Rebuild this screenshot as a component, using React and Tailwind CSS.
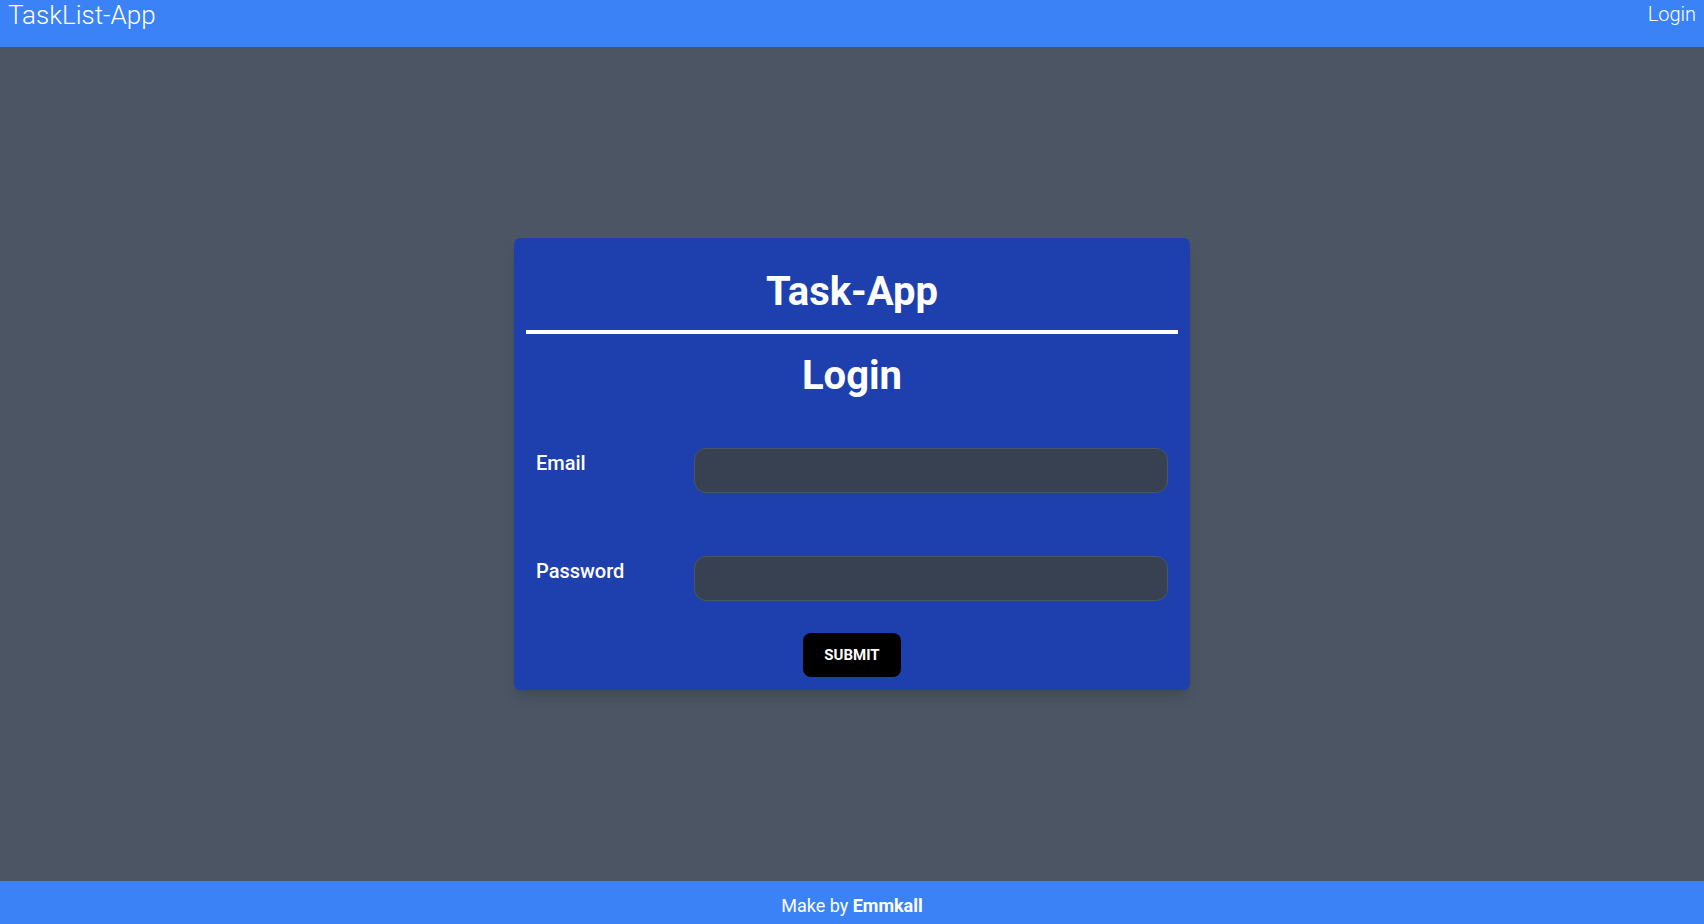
export default function App() {
  return (
    <div className="flex h-screen flex-col bg-[#4b5563] font-['Roboto',sans-serif] text-white">
      <header className="flex h-[47px] shrink-0 items-start justify-between bg-[#3b82f6] px-2">
        <span className="mt-[2px] text-[26px] leading-none font-light">TaskList-App</span>
        <a href="#" className="mt-[4px] text-xl leading-none font-light">
          Login
        </a>
      </header>

      <main className="flex flex-1 items-center justify-center">
        <div className="w-[676px] rounded-md bg-[#1e40af] p-3 pb-[13px] shadow-lg">
          <h1 className="mt-[18px] mb-[14px] text-center text-[40px] leading-[48px] font-bold">Task-App</h1>
          <hr className="border-t-4 border-white" />
          <h2 className="mt-[18px] text-center text-[40px] leading-[48px] font-bold">Login</h2>

          <form className="mt-12 px-[10px]" onSubmit={(e) => e.preventDefault()}>
            <div className="grid grid-cols-4 items-start">
              <label htmlFor="email" className="pt-[1px] text-xl font-medium">
                Email
              </label>
              <input
                id="email"
                type="email"
                className="col-span-3 h-[45px] rounded-xl border border-[#4b5563] bg-[#374151] px-3 outline-none"
              />
            </div>
            <div className="mt-[63px] grid grid-cols-4 items-start">
              <label htmlFor="password" className="pt-[1px] text-xl font-medium">
                Password
              </label>
              <input
                id="password"
                type="password"
                className="col-span-3 h-[45px] rounded-xl border border-[#4b5563] bg-[#374151] px-3 outline-none"
              />
            </div>
            <div className="mt-8 flex justify-center">
              <button type="submit" className="h-[44px] w-[98px] rounded-lg bg-black text-[15px] font-bold">
                SUBMIT
              </button>
            </div>
          </form>
        </div>
      </main>

      <footer className="h-[43px] shrink-0 bg-[#3b82f6] pt-[11px] text-center text-lg leading-7">
        Make by <span className="font-bold">Emmkall</span>
      </footer>
    </div>
  );
}
